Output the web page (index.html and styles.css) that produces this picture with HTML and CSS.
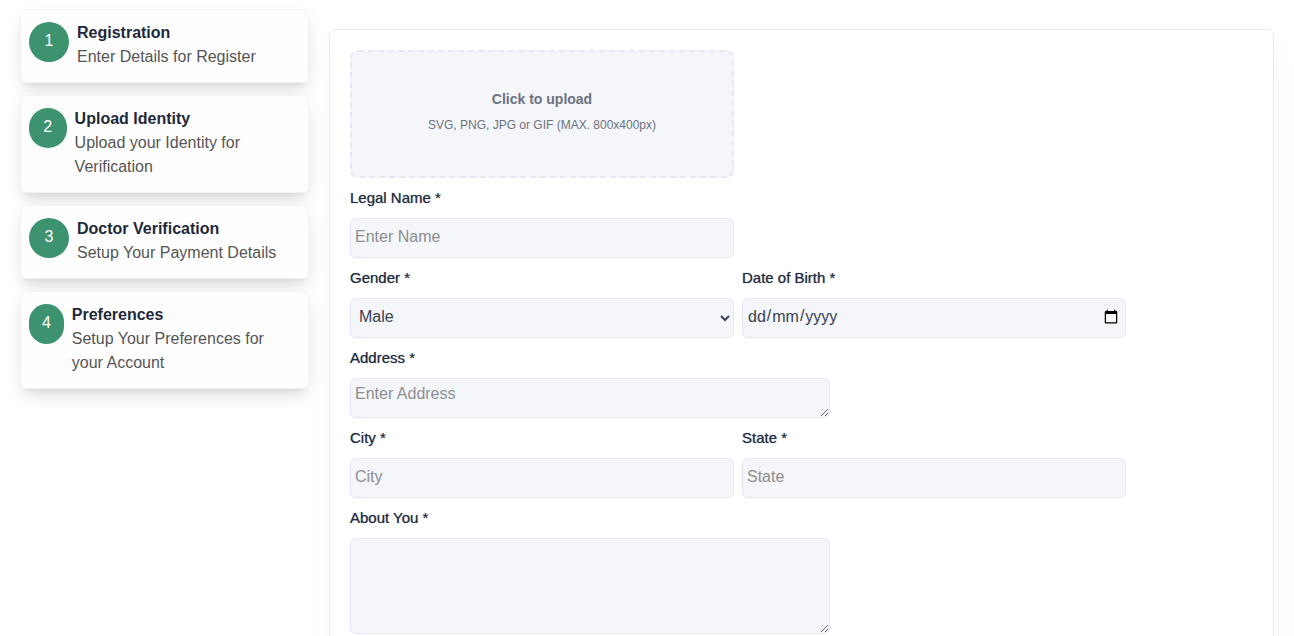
FILE: index.html
```
<!DOCTYPE html>
<html lang="en">
<head>
<meta charset="utf-8">
<meta name="viewport" content="width=device-width, initial-scale=1">
<title>Registration</title>
<link rel="stylesheet" href="styles.css">
</head>
<body>
<div class="page">
  <ol class="steps">
    <li class="step">
      <span class="step-number">1</span>
      <div class="step-text"><h2 class="step-title">Registration</h2><p class="step-note">Enter Details for Register</p></div>
    </li>
    <li class="step">
      <span class="step-number">2</span>
      <div class="step-text"><h2 class="step-title">Upload Identity</h2><p class="step-note">Upload your Identity for Verification</p></div>
    </li>
    <li class="step">
      <span class="step-number">3</span>
      <div class="step-text"><h2 class="step-title">Doctor Verification</h2><p class="step-note">Setup Your Payment Details</p></div>
    </li>
    <li class="step">
      <span class="step-number">4</span>
      <div class="step-text"><h2 class="step-title">Preferences</h2><p class="step-note">Setup Your Preferences for your Account</p></div>
    </li>
  </ol>
  <main class="panel">
    <form class="form">
      <button type="button" class="upload">
        <span class="upload-title">Click to upload</span>
        <span class="upload-note">SVG, PNG, JPG or GIF (MAX. 800x400px)</span>
      </button>
      <div class="row">
        <div class="field"><label class="label" for="name">Legal Name *</label><input class="control" id="name" type="text" placeholder="Enter Name"></div>
      </div>
      <div class="row">
        <div class="field"><label class="label" for="gender">Gender *</label><select class="control" id="gender"><option>Male</option><option>Female</option><option>Other</option></select></div>
        <div class="field"><label class="label" for="dob">Date of Birth *</label><input class="control control-date" id="dob" type="date"></div>
      </div>
      <div class="row">
        <div class="field field-wide"><label class="label" for="address">Address *</label><textarea class="control" id="address" placeholder="Enter Address"></textarea></div>
      </div>
      <div class="row">
        <div class="field"><label class="label" for="city">City *</label><input class="control" id="city" type="text" placeholder="City"></div>
        <div class="field"><label class="label" for="state">State *</label><input class="control" id="state" type="text" placeholder="State"></div>
      </div>
      <div class="row">
        <div class="field field-wide"><label class="label" for="about">About You *</label><textarea class="control control-tall" id="about"></textarea></div>
      </div>
    </form>
  </main>
</div>
</body>
</html>
```
FILE: styles.css
```
*, *::before, *::after { box-sizing: border-box; }
body {
  margin: 0;
  background: #fff;
  color: #1e293b;
  font-family: "Liberation Sans", Arial, sans-serif;
  font-size: 16px;
  line-height: 24px;
}
h2, p, ol { margin: 0; padding: 0; }
.page { display: flex; align-items: flex-start; gap: 20px; padding: 0 20px; }

.steps {
  display: flex;
  flex: none;
  flex-direction: column;
  gap: 12px;
  width: 289px;
  padding-top: 9px;
  list-style: none;
}
.step {
  display: flex;
  align-items: flex-start;
  gap: 8px;
  padding: 12px 8px;
  border: 1px solid #f3f3f3;
  border-radius: 6px;
  background: #fefefe;
  box-shadow: 0 10px 15px -3px rgba(0, 0, 0, .1), 0 4px 6px -4px rgba(0, 0, 0, .1), 0 4px 24px rgba(0, 0, 0, .03);
}
.step-number {
  width: 40px;
  height: 40px;
  padding: 7px 8px;
  border-radius: 20px;
  background: #3d9270;
  color: #fff;
  text-align: center;
}
.step-text { margin-top: -1px; padding: 0 2px 1px 0; }
.step-title { color: #1e293b; font-size: 16px; font-weight: 700; }
.step-note { color: #555; }

.panel {
  flex: 1;
  min-width: 0;
  margin-top: 29px;
  padding: 20px;
  border: 1px solid #e6e8f2;
  border-radius: 6px;
  background: #fff;
  box-shadow: 0 20px 25px rgba(210, 230, 255, .25);
}
.form { display: flex; flex-direction: column; }
.upload {
  display: flex;
  flex-direction: column;
  align-items: center;
  justify-content: center;
  gap: 8px;
  width: 384px;
  max-width: 100%;
  height: 128px;
  padding-bottom: 8px;
  border: 2px dashed #e5e7f3;
  border-radius: 8px;
  background: #f4f6fa;
  color: #6b7280;
  font-family: inherit;
}
.upload-title { font-size: 14px; font-weight: 700; line-height: 20px; }
.upload-note { font-size: 12px; line-height: 16px; }
.row { display: flex; flex-wrap: wrap; gap: 0 8px; }
.field { display: flex; flex-direction: column; width: 384px; max-width: 100%; }
.field-wide { width: 480px; }
.label { padding: 8px 0; font-size: 15px; font-weight: 500; text-shadow: 0 0 1px rgba(30, 41, 59, .6); }
.control {
  width: 100%;
  height: 40px;
  padding: 4px 4px 7px;
  border: 1px solid #e5e7f3;
  border-radius: 6px;
  background: #f4f6fa;
  color: #374151;
  font-family: inherit;
  font-size: 16px;
  line-height: 24px;
}
textarea.control { display: block; padding: 3px 4px; }
.control-tall { height: 96px; }
.control::placeholder { color: #8e8e8e; }

/* Day, month, year order; the separators fill the free cells. */
.control-date::-webkit-datetime-edit-fields-wrapper {
  display: inline-grid;
  grid-template-columns: repeat(5, auto);
  justify-content: start;
}
.control-date::-webkit-datetime-edit-day-field { grid-area: 1 / 1; }
.control-date::-webkit-datetime-edit-month-field { grid-area: 1 / 3; }
.control-date::-webkit-datetime-edit-year-field { grid-area: 1 / 5; }
```
